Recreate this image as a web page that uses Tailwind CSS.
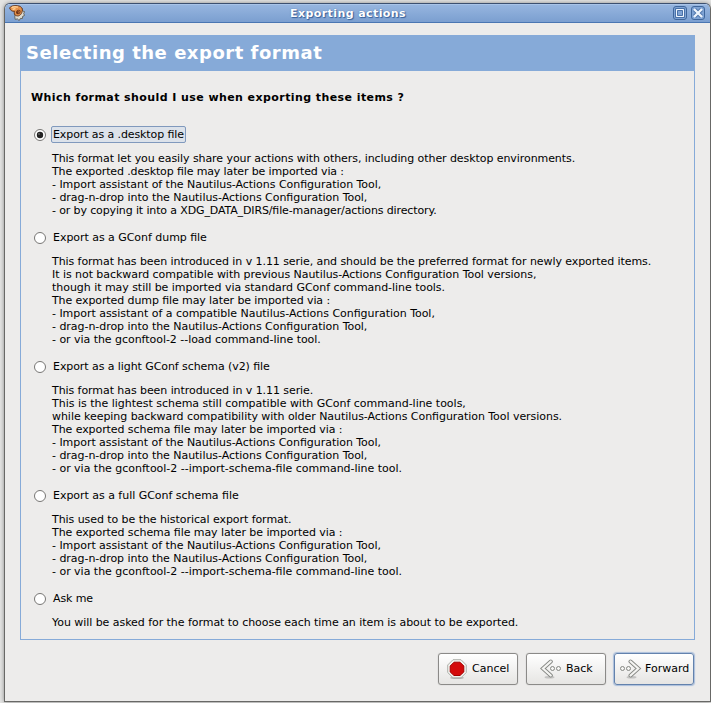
<!DOCTYPE html>
<html lang="en">
<head>
<meta charset="utf-8">
<title>Exporting actions</title>
<script src="https://cdn.jsdelivr.net/npm/@tailwindcss/browser@4"></script>
</head>
<body class="w-[711px] h-[703px] overflow-hidden bg-[#e4e4e3] pt-[3px] pl-1 font-['DejaVu_Sans','Liberation_Sans',sans-serif] text-[11px] leading-[13px] text-black [font-feature-settings:'liga'_1]">
<main class="w-[707px] h-[699px] flex flex-col rounded-t-[6px] border border-[#686866] border-t-[#3c5070] bg-[#edeceb] shadow-[0_0_4px_rgba(0,0,0,0.4)] overflow-hidden">
  <header class="relative h-[19px] shrink-0 flex items-center justify-center border-b border-[#4a76b2] border-t border-t-[#a9c4e8] bg-linear-to-b from-[#96b5df] to-[#7b9fd0]">
    <svg class="absolute left-[4px] top-0 w-4 h-4" viewBox="0 0 16 16">
      <path d="M6 9l7-6 .5 3 2.100.6-.9 2 .9 1.800-1.900.9-.3 2.200-2-.1-1.200 2.200-1.800-1.700-2.200.5-.4-2.300z" fill="#dcdbd2" stroke="#5d5c55" stroke-width=".9"/>
      <path d="M.6 3C1.500.9 5 .3 8.500.7c3.700.4 5.400 2.600 4.700 5.600-.6 3-2.900 5.200-5.500 4.500-2.400-.6-3-2.500-2.100-4.400C3.300 6.600.9 5 .6 3z" fill="#e5914a" stroke="#5b301a" stroke-width=".9"/>
      <path d="M2.500 2.700C4.500 1.500 7 1.500 9 2.200M3.500 4.500l3-1" fill="none" stroke="#ffce91" stroke-width="1.400"/>
      <path d="M7.300 6.300c1-2 3.500-2.200 4.200-.5.7 1.700-1.100 3.800-2.800 3.500-1.500-.3-2.100-1.600-1.400-3z" fill="#6e3216"/>
      <path d="M8.800 6.300c1-.8 1.900-.4 1.900.3S9.700 8 9 7.700" fill="none" stroke="#c97a40"/>
    </svg>
    <h1 class="relative -left-[9.5px] top-0 font-bold text-white tracking-[0.42px] whitespace-nowrap [text-shadow:0_0_1px_#365f99,1px_1px_1px_#365f99]">Exporting actions</h1>
    <svg class="absolute right-[23px] top-[1px] w-[14px] h-[14px]" viewBox="0 0 14 14">
      <rect x=".5" y=".5" width="13" height="13" rx="2.500" fill="#7fa3d4" stroke="#3f669b"/>
      <path d="M2.500 2.500h9v9h-9z" fill="none" stroke="#4a72a8"/>
      <path d="M3.500 3.500h7v7h-7z" fill="#dce9f8" stroke="#f0f6fd"/>
      <path d="M4.500 4.500h5v5h-5z" fill="#7fa3d4" stroke="#4a72a8"/>
    </svg>
    <svg class="absolute right-[5px] top-[1px] w-[14px] h-[14px]" viewBox="0 0 14 14">
      <rect x=".5" y=".5" width="13" height="13" rx="2.500" fill="#7fa3d4" stroke="#3f669b"/>
      <path d="M3.500 3.500l7 7M10.500 3.500l-7 7" stroke="#4a72a8" stroke-width="4"/>
      <path d="M3 3l8 8M11 3l-8 8" stroke="#edf4fc" stroke-width="2.400"/>
    </svg>
  </header>

  <section class="ml-[15px] mt-[12px] w-[675px] h-[605px] shrink-0 flex flex-col border border-[#86aad8]">
    <h2 class="-mx-px -mt-px h-9 shrink-0 bg-[#86aad8] pl-[6px] pb-px flex items-center font-bold text-white text-[18px] tracking-[0.52px] whitespace-nowrap">Selecting the export format</h2>
    <p class="ml-[10px] mt-[20px] font-bold tracking-[0.42px] whitespace-nowrap">Which format should I use when exporting these items ?</p>

    <div class="mt-[20px] ml-[13px] flex flex-col gap-[10px] whitespace-nowrap">
      <div>
        <label class="h-5 flex items-center gap-[5px]">
          <svg class="w-3 h-3 mt-px" viewBox="0 0 12 12"><circle cx="6" cy="6" r="5.500" fill="#fff" stroke="#777674"/><circle cx="6" cy="6" r="3.200" fill="#222"/><circle cx="5" cy="5" r=".8" fill="#888"/></svg>
          <span class="h-[17px] w-[135px] pl-[1px] flex items-center rounded-[2px] border border-[#8099bd] bg-[#dce2ea] tracking-[-0.1px]">Export as a .desktop file</span>
        </label>
        <div class="mt-2 ml-[18px]">
          <p class="tracking-[-0.073px]">This format let you easily share your actions with others, including other desktop environments.</p>
          <p class="tracking-[-0.127px]">The exported .desktop file may later be imported via :</p>
          <p class="tracking-[-0.035px]">- Import assistant of the Nautilus-Actions Configuration Tool,</p>
          <p class="tracking-[-0.04px]">- drag-n-drop into the Nautilus-Actions Configuration Tool,</p>
          <p class="tracking-[-0.13px]">- or by copying it into a XDG_DATA_DIRS/file-manager/actions directory.</p>
        </div>
      </div>
      <div>
        <label class="h-5 flex items-center gap-[7px]">
          <svg class="w-3 h-3 mt-px" viewBox="0 0 12 12"><circle cx="6" cy="6" r="5.500" fill="#fff" stroke="#777674"/></svg>
          <span class="tracking-[-0.04px]">Export as a GConf dump file</span>
        </label>
        <div class="mt-2 ml-[18px]">
          <p class="tracking-[-0.073px]">This format has been introduced in v 1.11 serie, and should be the preferred format for newly exported items.</p>
          <p class="tracking-[-0.05px]">It is not backward compatible with previous Nautilus-Actions Configuration Tool versions,</p>
          <p class="tracking-[-0.042px]">though it may still be imported via standard GConf command-line tools.</p>
          <p class="tracking-[-0.1px]">The exported dump file may later be imported via :</p>
          <p class="tracking-[-0.03px]">- Import assistant of a compatible Nautilus-Actions Configuration Tool,</p>
          <p class="tracking-[-0.04px]">- drag-n-drop into the Nautilus-Actions Configuration Tool,</p>
          <p class="tracking-[-0.04px]">- or via the gconftool-2 --load command-line tool.</p>
        </div>
      </div>
      <div>
        <label class="h-5 flex items-center gap-[7px]">
          <svg class="w-3 h-3 mt-px" viewBox="0 0 12 12"><circle cx="6" cy="6" r="5.500" fill="#fff" stroke="#777674"/></svg>
          <span class="tracking-[-0.075px]">Export as a light GConf schema (v2) file</span>
        </label>
        <div class="mt-2 ml-[18px]">
          <p class="tracking-[-0.07px]">This format has been introduced in v 1.11 serie.</p>
          <p class="tracking-[-0.015px]">This is the lightest schema still compatible with GConf command-line tools,</p>
          <p class="tracking-[-0.048px]">while keeping backward compatibility with older Nautilus-Actions Configuration Tool versions.</p>
          <p class="tracking-[-0.075px]">The exported schema file may later be imported via :</p>
          <p class="tracking-[-0.04px]">- Import assistant of the Nautilus-Actions Configuration Tool,</p>
          <p class="tracking-[-0.04px]">- drag-n-drop into the Nautilus-Actions Configuration Tool,</p>
          <p class="tracking-[-0.02px]">- or via the gconftool-2 --import-schema-file command-line tool.</p>
        </div>
      </div>
      <div>
        <label class="h-5 flex items-center gap-[7px]">
          <svg class="w-3 h-3 mt-px" viewBox="0 0 12 12"><circle cx="6" cy="6" r="5.500" fill="#fff" stroke="#777674"/></svg>
          <span class="tracking-[-0.03px]">Export as a full GConf schema file</span>
        </label>
        <div class="mt-2 ml-[18px]">
          <p class="tracking-[-0.065px]">This used to be the historical export format.</p>
          <p class="tracking-[-0.075px]">The exported schema file may later be imported via :</p>
          <p class="tracking-[-0.04px]">- Import assistant of the Nautilus-Actions Configuration Tool,</p>
          <p class="tracking-[-0.04px]">- drag-n-drop into the Nautilus-Actions Configuration Tool,</p>
          <p class="tracking-[-0.02px]">- or via the gconftool-2 --import-schema-file command-line tool.</p>
        </div>
      </div>
      <div>
        <label class="h-5 flex items-center gap-[7px]">
          <svg class="w-3 h-3 mt-px" viewBox="0 0 12 12"><circle cx="6" cy="6" r="5.500" fill="#fff" stroke="#777674"/></svg>
          <span class="tracking-[-0.1px]">Ask me</span>
        </label>
        <p class="mt-2 ml-[18px] tracking-[-0.05px]">You will be asked for the format to choose each time an item is about to be exported.</p>
      </div>
    </div>
  </section>

  <footer class="mt-[13px] mr-[16px] flex justify-end gap-2">
    <button class="w-20 h-8 pl-2 flex items-center gap-[5px] rounded-[3px] border border-[#8b8a88] bg-linear-to-b from-white to-[#e6e5e3] shadow-[0_0_1px_#a5a4a2]">
      <svg class="w-5 h-5" viewBox="0 0 20 20"><ellipse cx="10" cy="18.800" rx="7" ry="1.200" fill="#888" opacity=".6"/><path d="M6 .7h8L19.300 6v7.500L14 18.800H6L.7 13.500V6z" fill="#f1f2ee" stroke="#aeb1aa"/><path d="M7 3.200h6L16.800 7v6L13 16.500H7L3.200 13V7z" fill="#d40a0a" stroke="#a40000"/></svg>
      <span class="pb-[2px]">Cancel</span>
    </button>
    <button class="w-20 h-8 pl-[13px] flex items-center gap-[4px] rounded-[3px] border border-[#8b8a88] bg-linear-to-b from-white to-[#e6e5e3] shadow-[0_0_1px_#a5a4a2]">
      <svg class="w-[22px] h-5" viewBox="0 0 22 20"><ellipse cx="9.500" cy="18.300" rx="5" ry="1.200" fill="#888" opacity=".4"/><g fill="none" stroke-linecap="round"><path d="M10.800 2.500L3 9.500l7.800 7" stroke="#858783" stroke-width="4"/><path d="M10.800 2.500L3 9.500l7.800 7" stroke="#f4f4f2" stroke-width="2.200"/></g><g fill="#f7f7f5" stroke="#858783"><circle cx="12.500" cy="9.500" r="2"/><circle cx="18.500" cy="9.500" r="2"/></g></svg>
      <span class="pb-[2px]">Back</span>
    </button>
    <button class="w-20 h-8 pl-[5px] flex items-center gap-[3px] rounded-[3px] border border-[#6382ad] bg-linear-to-b from-white to-[#e6e5e3] shadow-[0_0_1px_1px_#a9bedb]">
      <svg class="w-[22px] h-5" viewBox="0 0 22 20"><ellipse cx="11.500" cy="18.300" rx="5" ry="1.200" fill="#888" opacity=".4"/><g fill="none" stroke-linecap="round"><path d="M10.500 2.500l7.800 7-7.800 7" stroke="#858783" stroke-width="4"/><path d="M10.500 2.500l7.800 7-7.800 7" stroke="#f4f4f2" stroke-width="2.200"/></g><g fill="#f7f7f5" stroke="#858783"><circle cx="8.500" cy="9.500" r="2"/><circle cx="2.500" cy="9.500" r="2"/></g></svg>
      <span class="pb-[2px]">Forward</span>
    </button>
  </footer>
</main>
</body>
</html>
